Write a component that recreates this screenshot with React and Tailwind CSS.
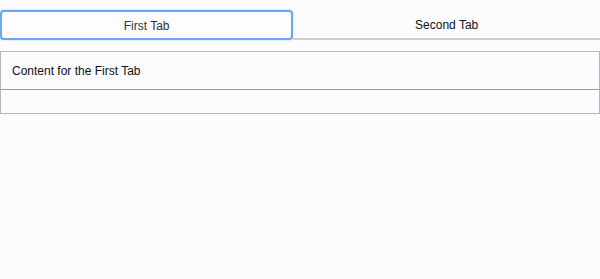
import React, { useState } from 'react';

const TABS = [
  { id: 'first', label: 'First Tab', content: 'Content for the First Tab' },
  { id: 'second', label: 'Second Tab', content: 'Content for the Second Tab' },
];

export default function App() {
  const [active, setActive] = useState('first');
  const current = TABS.find(t => t.id === active);

  return (
    <div className="min-h-screen bg-[#fcfbfd] pt-[10px] text-[12px] text-[#111]" style={{ fontFamily: "'Liberation Sans', Arial, sans-serif" }}>
      <div className="flex">
        {TABS.map(t => (
          <button
            key={t.id}
            onClick={() => setActive(t.id)}
            className={
              t.id === active
                ? 'flex-auto h-[30px] pt-px rounded-[4px] border-2 border-[#6aa7f0] bg-[#fdfcfe] text-[#333] shadow-[0_0_2px_#9cc4f5]'
                : 'flex-auto h-[30px] pt-px border-b-2 border-[#cfcfcf] text-[#111]'
            }
          >
            {t.label}
          </button>
        ))}
      </div>
      <div className="mt-[11px]">
        <div className="h-[39px] border border-[#b5b5b5] border-b-[#999] px-[11px] flex items-center">
          {current.content}
        </div>
        <div className="h-[24px] border border-t-0 border-[#b5b5b5]" />
      </div>
    </div>
  );
}
